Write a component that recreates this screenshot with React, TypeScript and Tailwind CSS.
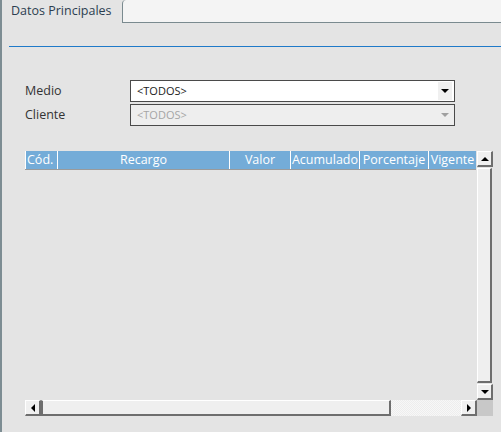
import React from "react";

const cols = [
  { label: "Cód.", w: "w-[33px]" },
  { label: "Recargo", w: "w-[172px]" },
  { label: "Valor", w: "w-[61px]" },
  { label: "Acumulado", w: "w-[69px]" },
  { label: "Porcentaje", w: "w-[69px]" },
  { label: "Vigente", w: "w-[47px]" },
];

function Caret({ color = "#000", dir = "down" }: { color?: string; dir?: "down" | "up" | "left" | "right" }) {
  const pts = {
    down: "0,0 8,0 4,4",
    up: "0,4 8,4 4,0",
    left: "4,0 4,8 0,4",
    right: "0,0 0,8 4,4",
  }[dir];
  const vb = dir === "left" || dir === "right" ? "0 0 4 8" : "0 0 8 4";
  const size = dir === "left" || dir === "right" ? { width: 4, height: 8 } : { width: 8, height: 4 };
  return (
    <svg viewBox={vb} {...size}>
      <polygon points={pts} fill={color} />
    </svg>
  );
}

function Select({ disabled }: { disabled?: boolean }) {
  return (
    <div
      className={`flex h-[22px] w-[325px] items-center border border-[#4a4a4a] ${
        disabled ? "bg-[#eeeeee] text-[#a5a5a5]" : "bg-white text-[#222]"
      }`}
    >
      <span className="flex-1 pl-[6px] text-[11px]">&lt;TODOS&gt;</span>
      <span className={`mr-[2px] flex h-[18px] w-[14px] items-center justify-center ${disabled ? "" : "bg-[#f0f0f0]"}`}>
        <Caret color={disabled ? "#a0a0a0" : "#000"} />
      </span>
    </div>
  );
}

function ScrollBtn({ dir }: { dir: "up" | "down" | "left" | "right" }) {
  return (
    <div className="flex h-[16px] w-[16px] shrink-0 items-center justify-center border-b-2 border-r-2 border-[#6e6e6e] bg-[#f0f0f0] border-t border-l border-t-white border-l-white">
      <Caret dir={dir} />
    </div>
  );
}

export default function App() {
  return (
    <div
      className="flex h-[432px] w-[501px] flex-col border-l-2 border-[#7d8d93] bg-[#e4e4e4] text-[#333]"
      style={{ fontFamily: '"Open Sans", "Noto Sans", sans-serif' }}
    >
      <div className="flex h-[23px]">
        <div className="w-[120px] pl-[9px] pt-[3px] text-[12.5px] leading-[16px] text-[#2c3e50]">Datos Principales</div>
        <div className="flex-1 rounded-tl-[4px] border-b border-l border-[#7a8a8f] bg-[#f4f4f4]" />
      </div>
      <div className="ml-[7px] mt-[23px] h-px bg-[#1f7ac9]" />

      <div className="mt-[33px] flex flex-col gap-[2px] pl-[23px]">
        <div className="flex items-center">
          <span className="w-[105px] text-[12.5px] text-[#333]">Medio</span>
          <Select />
        </div>
        <div className="flex items-center">
          <span className="w-[105px] text-[12.5px] text-[#333]">Cliente</span>
          <Select disabled />
        </div>
      </div>

      <div className="ml-[23px] mt-[25px] flex w-[469px] flex-col">
        <div className="flex h-[249px]">
          <div className="flex w-[451px] flex-col">
            <div className="flex h-[19px] border-b border-[#9a9a9a] bg-[#74acd8]">
              {cols.map((c, i) => (
                <div
                  key={c.label}
                  className={`${c.w} shrink-0 overflow-hidden whitespace-nowrap text-center text-[12.5px] leading-[18px] text-white ${
                    i < cols.length - 1 ? "border-r border-white" : ""
                  } ${i === 0 ? "border-l border-white pl-[1px] text-left" : ""}`}
                >
                  {c.label}
                </div>
              ))}
            </div>
            <div className="flex-1" />
          </div>
          <div className="flex w-[16px] flex-col pl-[1px]">
            <ScrollBtn dir="up" />
            <div className="my-[1px] flex-1 border-b-2 border-r-2 border-[#6e6e6e] bg-[#efefef] border-t border-l border-t-white border-l-white" />
            <ScrollBtn dir="down" />
          </div>
        </div>
        <div className="flex h-[16px]">
          <ScrollBtn dir="left" />
          <div className="w-[350px] border-b-2 border-r-2 border-l-2 border-[#6e6e6e] border-t border-t-white bg-[#efefef]" />
          <div className="w-[70px] bg-[#f2f2f2] [background-image:repeating-conic-gradient(#ededed_0_25%,#f7f7f7_0_50%)] [background-size:2px_2px]" />
          <ScrollBtn dir="right" />
          <div className="w-[16px] bg-[#c8c8c8]" />
        </div>
      </div>
    </div>
  );
}
